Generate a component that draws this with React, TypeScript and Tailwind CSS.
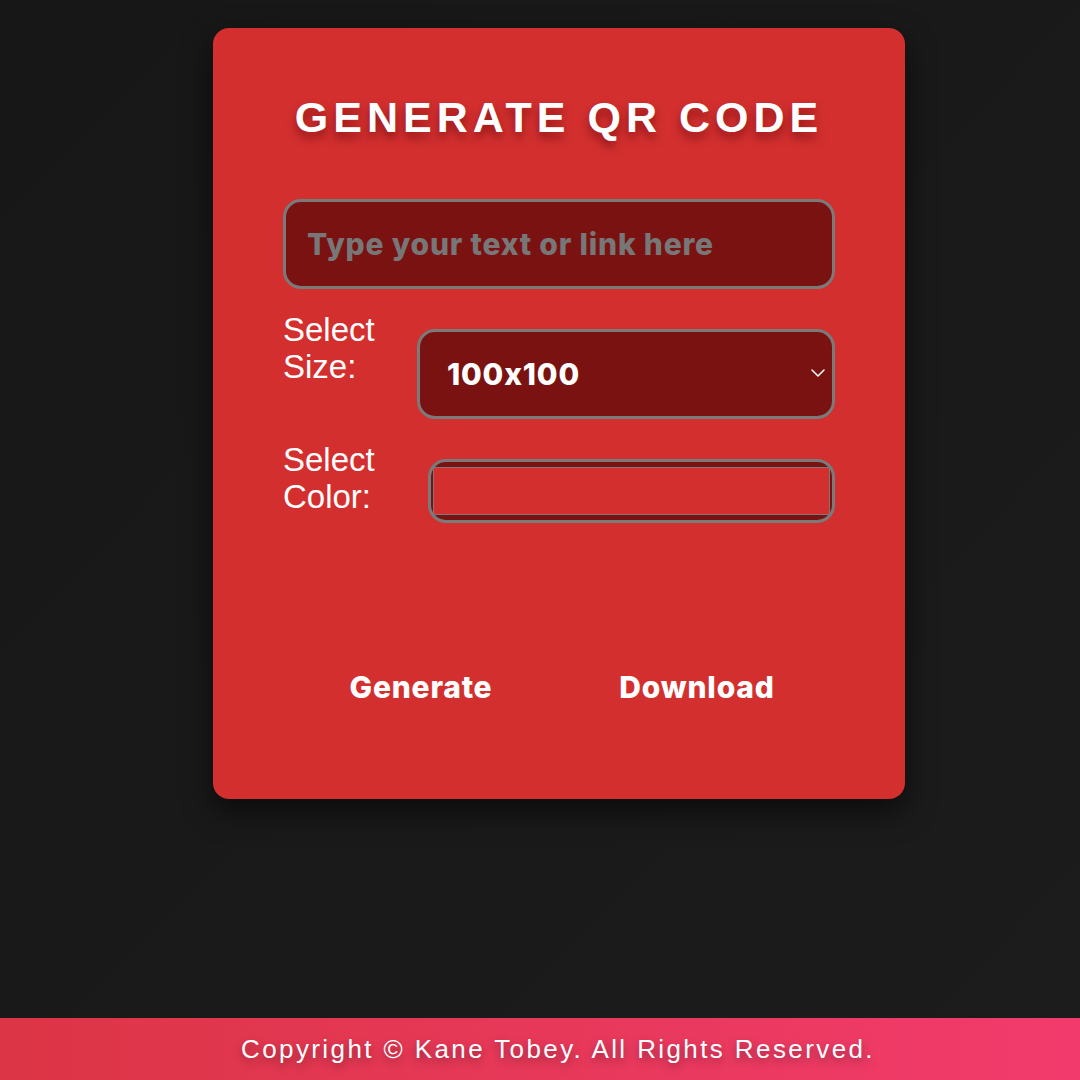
import { ChevronDown } from 'lucide-react'

const poppins = "font-['Inter','Open_Sans',sans-serif] font-extrabold tracking-[0.8px]"

export default function App() {
  return (
    <div className="flex min-h-[1080px] flex-col bg-gradient-to-br from-[#171717] to-[#1c1c1c] font-['Liberation_Sans',Arial,sans-serif]">
      <main className="flex flex-1 justify-center pl-[38px] pt-[28px]">
        <div className="flex h-[771px] w-[692px] flex-col rounded-2xl bg-[#d32f2f] px-[70px] pt-[68px] shadow-[0_12px_30px_rgba(0,0,0,0.6)]">
          <h1 className="text-center text-[43px] font-bold leading-none tracking-[5px] text-white [text-shadow:0_6px_10px_rgba(90,0,0,0.55)]">
            GENERATE QR CODE
          </h1>

          <input
            className={`mt-[60px] h-[90px] w-full rounded-[18px] border-[3px] border-[#7a7a7a] bg-[#7a1212] px-[21px] text-[30px] text-white outline-none placeholder:text-[#777] ${poppins}`}
            placeholder="Type your text or link here"
          />

          <div className="mt-[40px] flex items-start">
            <label className="-mt-[18px] w-[134px] text-[33px] leading-[37px] text-white">
              Select
              <br />
              Size:
            </label>
            <div className="relative flex h-[90px] flex-1 items-center rounded-[18px] border-[3px] border-[#7a7a7a] bg-[#7a1212] pl-[27px]">
              <span className={`text-[30px] text-white ${poppins}`}>100x100</span>
              <ChevronDown className="absolute right-[2px] top-[29px] h-[24px] w-[24px] text-white" strokeWidth={1.5} />
            </div>
          </div>

          <div className="mt-[40px] flex items-start">
            <label className="-mt-[18px] w-[145px] text-[33px] leading-[37px] text-white">
              Select
              <br />
              Color:
            </label>
            <div className="flex h-[64px] flex-1 rounded-[18px] border-[3px] border-[#7a7a7a] bg-[#7a1212] px-[2px] py-[5px]">
              <div className="flex-1 border border-[#7a7a7a] bg-[#d32f2f]" />
            </div>
          </div>

          <div className="mt-[142px] grid grid-cols-2">
            <button className={`text-center text-[30px] text-white ${poppins}`}>Generate</button>
            <button className={`text-center text-[30px] text-white ${poppins}`}>Download</button>
          </div>
        </div>
      </main>

      <footer className="flex h-[62px] items-center justify-center bg-gradient-to-r from-[#dc3545] to-[#f23b6c] pl-[36px]">
        <p className="text-[26px] tracking-[2.4px] text-white [text-shadow:0_4px_8px_rgba(0,0,0,0.35)]">
          Copyright © Kane Tobey. All Rights Reserved.
        </p>
      </footer>
    </div>
  )
}
